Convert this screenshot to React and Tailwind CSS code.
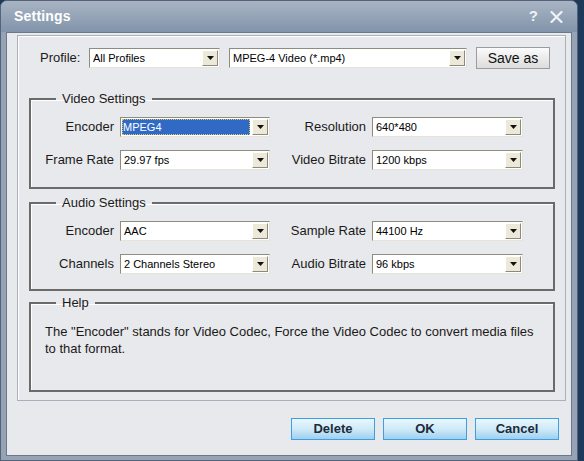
import React from "react";

const font = { fontFamily: '"Liberation Sans", Arial, sans-serif' };

function Arrow() {
  return (
    <div className="w-[16px] h-full flex items-center justify-center bg-[#ece9d8] border border-t-white border-l-white border-r-[#8c8a80] border-b-[#8c8a80]">
      <svg width="7" height="4" viewBox="0 0 7 4">
        <path d="M0 0h7L3.5 4z" fill="#111" />
      </svg>
    </div>
  );
}

function Select({ value, width, selected }) {
  return (
    <div
      className="flex items-stretch h-[20px] bg-white border border-t-[#8e8c7e] border-l-[#8e8c7e] border-r-[#e6e4da] border-b-[#e6e4da] p-[1px]"
      style={{ width }}
    >
      {selected ? (
        <div className="flex-1 flex items-center mr-[2px] bg-[#316ac5] outline outline-1 outline-dotted outline-[#d6c86a] -outline-offset-1 text-white text-[11px] pl-[1px]">
          {value}
        </div>
      ) : (
        <div className="flex-1 flex items-center text-[11px] text-black pl-[2px]">
          {value}
        </div>
      )}
      <Arrow />
    </div>
  );
}

function Field({ label, value, labelWidth, selectWidth, selected }) {
  return (
    <div className="flex items-center">
      <div
        className="text-right text-[13px] text-[#1a1a1a] pr-[6px]"
        style={{ width: labelWidth }}
      >
        {label}
      </div>
      <Select value={value} width={selectWidth} selected={selected} />
    </div>
  );
}

function Group({ title, className, children }) {
  return (
    <fieldset
      className={
        "ml-[11px] w-[526px] border-2 border-[#6a6a6a] shadow-[inset_1px_1px_0_#ffffff] " +
        className
      }
    >
      <legend className="ml-[25px] px-[6px] text-[13px] leading-[16px] text-[#1a1a1a]">
        {title}
      </legend>
      {children}
    </fieldset>
  );
}

function FieldRows({ rows }) {
  return (
    <div className="flex flex-col gap-[13px] pt-[10px]">
      {rows.map((r) => (
        <div key={r[0]} className="flex">
          <Field
            label={r[0]}
            value={r[1]}
            labelWidth="89px"
            selectWidth="150px"
            selected={r[4]}
          />
          <Field label={r[2]} value={r[3]} labelWidth="102px" selectWidth="151px" />
        </div>
      ))}
    </div>
  );
}

function BlueButton({ children }) {
  return (
    <button className="w-[84px] h-[22px] border border-[#3aa0e0] bg-gradient-to-b from-[#eaf7fd] via-[#cfeaf8] to-[#9fd0ef] text-[13px] font-bold text-[#1c2a3a]">
      {children}
    </button>
  );
}

export default function App() {
  return (
    <div className="w-[584px] h-[461px] flex bg-[#1e3a5a]" style={font}>
      <div className="w-[578px] h-full flex flex-col rounded-t-[7px] bg-[#95a3b5] border border-[#55637a]">
        <div className="h-[31px] flex items-center justify-between rounded-t-[6px] bg-gradient-to-b from-[#a8b4c3] to-[#8294ab] pl-[13px] pr-[14px]">
          <span className="text-[14px] font-bold text-white tracking-[0.2px]">
            Settings
          </span>
          <div className="flex items-center gap-[12px] text-[#eef2f6] font-bold">
            <span className="text-[15px]">?</span>
            <svg width="13" height="12" viewBox="0 0 13 12">
              <path
                d="M1.5 1l10 10M11.5 1l-10 10"
                stroke="#eef2f6"
                strokeWidth="2.2"
                strokeLinecap="round"
              />
            </svg>
          </div>
        </div>

        <div className="flex-1 mx-[5px] mb-[4px] bg-[#e8e9ec] border border-[#6b7889] flex flex-col">
          <div className="mt-[2px] ml-[10px] mr-[5px] h-[366px] border border-[#a8b0bc] shadow-[inset_1px_1px_0_#ffffff]">
            <div className="flex items-center pt-[11px] pl-[22px]">
              <span className="text-[13px] text-[#1a1a1a] w-[49px]">Profile:</span>
              <Select value="All Profiles" width="131px" />
              <div className="w-[9px]" />
              <Select value="MPEG-4 Video (*.mp4)" width="238px" />
              <button className="ml-[9px] w-[74px] h-[22px] border border-[#9c9c9c] bg-gradient-to-b from-[#fbfbfb] to-[#dcdcdc] text-[14px] text-[#111]">
                Save as
              </button>
            </div>

            <Group title="Video Settings" className="mt-[22px] h-[98px]">
              <FieldRows
                rows={[
                  ["Encoder", "MPEG4", "Resolution", "640*480", true],
                  ["Frame Rate", "29.97 fps", "Video Bitrate", "1200 kbps"],
                ]}
              />
            </Group>

            <Group title="Audio Settings" className="mt-[6px] h-[96px]">
              <FieldRows
                rows={[
                  ["Encoder", "AAC", "Sample Rate", "44100 Hz"],
                  ["Channels", "2 Channels Stereo", "Audio Bitrate", "96 kbps"],
                ]}
              />
            </Group>

            <Group title="Help" className="mt-[4px] h-[97px]">
              <p className="pt-[12px] pl-[14px] pr-[10px] text-[13px] leading-[17px] text-[#1a1a1a]">
                The "Encoder" stands for Video Codec, Force the Video Codec to
                convert media files to that format.
              </p>
            </Group>
          </div>

          <div className="flex justify-end gap-[8px] mt-[17px] mr-[12px]">
            <BlueButton>Delete</BlueButton>
            <BlueButton>OK</BlueButton>
            <BlueButton>Cancel</BlueButton>
          </div>
        </div>
      </div>
    </div>
  );
}
